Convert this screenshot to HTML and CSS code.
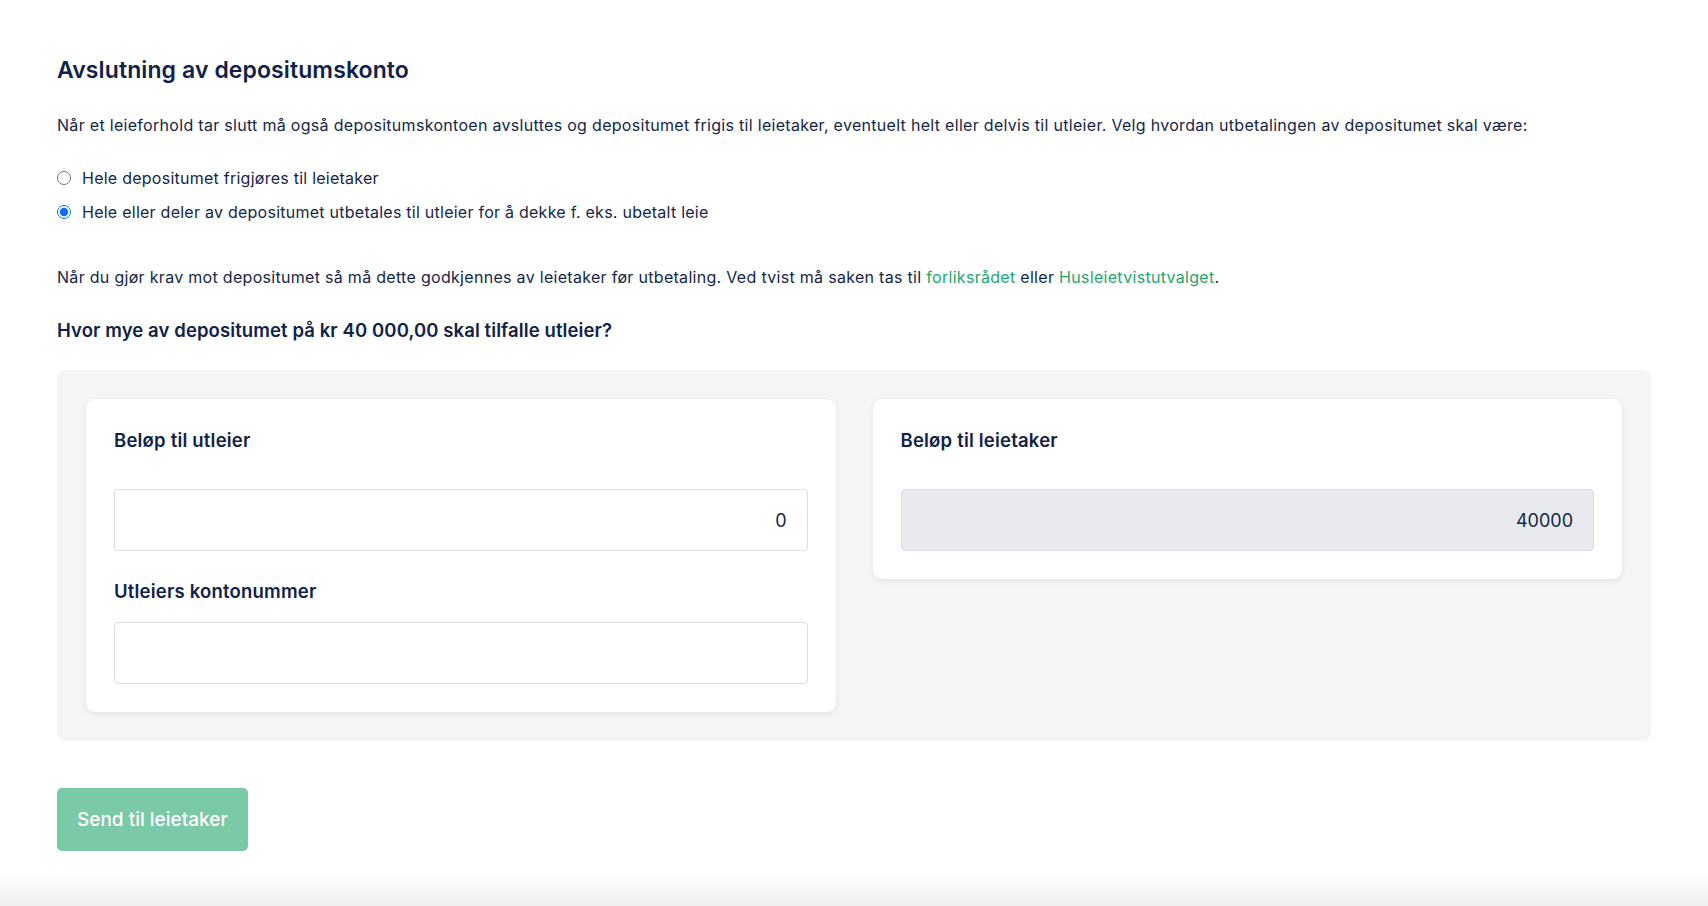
FILE: index.html
```html
<!DOCTYPE html>
<html lang="no">
<head>
  <meta charset="UTF-8">
  <title>Avslutning av depositumskonto</title>
  <link rel="stylesheet" href="styles.css">
</head>
<body>

  <div class="page">
    <h1>Avslutning av depositumskonto</h1>

    <p class="intro">Når et leieforhold tar slutt må også depositumskontoen avsluttes og depositumet frigis til leietaker, eventuelt helt eller delvis til utleier. Velg hvordan utbetalingen av depositumet skal være:</p>

    <div class="choices">
      <label class="choice">
        <input type="radio" name="payout" value="tenant">
        <span>Hele depositumet frigjøres til leietaker</span>
      </label>
      <label class="choice">
        <input type="radio" name="payout" value="landlord" checked>
        <span>Hele eller deler av depositumet utbetales til utleier for å dekke f. eks. ubetalt leie</span>
      </label>
    </div>

    <p class="notice">Når du gjør krav mot depositumet så må dette godkjennes av leietaker før utbetaling. Ved tvist må saken tas til <a href="#">forliksrådet</a> eller <a href="#">Husleietvistutvalget</a>.</p>

    <h2>Hvor mye av depositumet på kr 40 000,00 skal tilfalle utleier?</h2>

    <div class="split-panel">
      <div class="card">
        <label class="field-label" for="landlordAmount">Beløp til utleier</label>
        <input class="field" type="text" id="landlordAmount" value="0">

        <label class="field-label second" for="accountNo">Utleiers kontonummer</label>
        <input class="field short-gap" type="text" id="accountNo">
      </div>

      <div class="card">
        <label class="field-label" for="tenantAmount">Beløp til leietaker</label>
        <input class="field" type="text" id="tenantAmount" value="40000" disabled>
      </div>
    </div>

    <button class="send-btn">Send til leietaker</button>
  </div>

</body>
</html>
```

FILE: styles.css
```css
html {
  height: 100%;
}

body {
  font-family: Inter, "Noto Sans", sans-serif;
  color: #15264a;
  margin: 0;
  min-height: 906px;
  background: linear-gradient(to bottom, #fff 0, #fff 872px, #efefef 906px);
}

.page {
  padding: 55px 57px 0 57px;
}

h1 {
  font-size: 23px;
  line-height: 30px;
  font-weight: 600;
  color: #11224a;
  margin: 0;
  letter-spacing: 0.1px;
}

p {
  font-size: 16px;
  line-height: 24px;
  letter-spacing: 0.3px;
  margin: 0;
}

.intro {
  margin-top: 28px;
}

.choices {
  margin-top: 29px;
  display: flex;
  flex-direction: column;
  gap: 10px;
}

.choice {
  display: flex;
  align-items: center;
  gap: 11px;
  font-size: 16px;
  line-height: 24px;
  letter-spacing: 0.25px;
}

.choice input {
  margin: 0;
  width: 14px;
  height: 14px;
  accent-color: #0b6cf5;
}

.notice {
  margin-top: 41px;
}

.notice a {
  color: #1fa66b;
  text-decoration: none;
}

h2 {
  font-size: 18.5px;
  line-height: 26px;
  font-weight: 600;
  color: #11224a;
  letter-spacing: 0.1px;
  margin: 28px 0 0 0;
}

.split-panel {
  margin-top: 27px;
  background-color: #f5f5f6;
  border-radius: 8px;
  padding: 29px;
  display: flex;
  gap: 37px;
  align-items: flex-start;
}

.card {
  flex: 1;
  background-color: #fff;
  border-radius: 9px;
  box-shadow: 0 2px 6px rgba(0, 0, 0, 0.08);
  padding: 28px 28px 28px 28px;
  display: flex;
  flex-direction: column;
}

.field-label {
  font-size: 18.5px;
  line-height: 26px;
  font-weight: 600;
  letter-spacing: 0.2px;
  color: #11224a;
}

.field-label.second {
  margin-top: 27px;
}

.field {
  margin-top: 36px;
  height: 62px;
  box-sizing: border-box;
  border: 1px solid #d9dde4;
  border-radius: 4px;
  background-color: #fff;
  padding: 0 20px;
  text-align: right;
  font-family: Inter, "Noto Sans", sans-serif;
  font-size: 18px;
  color: #15264a;
}

.field.short-gap {
  margin-top: 18px;
}

.field:disabled {
  background-color: #e8eaee;
  color: #15264a;
}

.send-btn {
  margin-top: 47px;
  background-color: #7ac9a7;
  color: #fff;
  border: none;
  border-radius: 5px;
  height: 63px;
  padding: 0 20px;
  font-family: Inter, "Noto Sans", sans-serif;
  font-size: 19px;
  font-weight: 500;
  cursor: pointer;
}
```
